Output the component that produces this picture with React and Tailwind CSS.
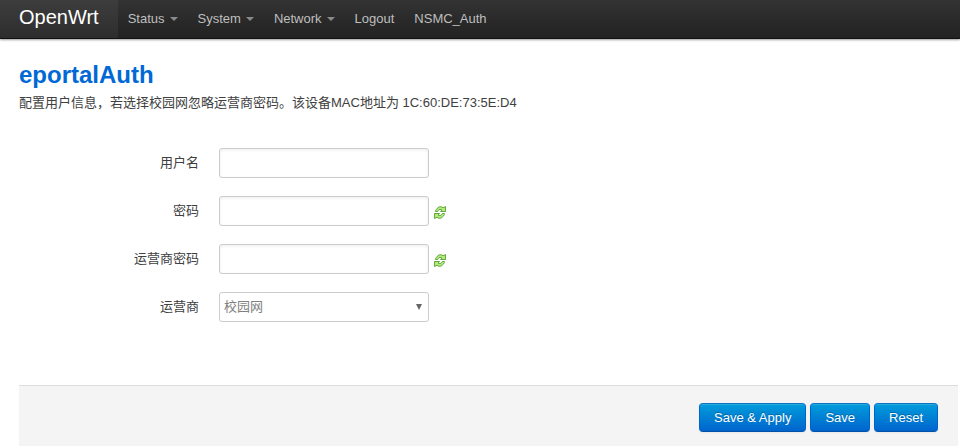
import React from "react";

const menu = [
  { label: "Status", dropdown: true },
  { label: "System", dropdown: true },
  { label: "Network", dropdown: true },
  { label: "Logout" },
  { label: "NSMC_Auth" },
];

const control =
  "h-[30px] w-[210px] rounded-[3px] border border-[#ccc] bg-white px-1 text-[13px] text-[#808080] outline-none";

function Caret() {
  return (
    <span className="mt-px ml-[5px] h-0 w-0 border-x-4 border-t-4 border-x-transparent border-t-[#8a8a8a]" />
  );
}

function ReloadIcon() {
  return (
    <svg width="12" height="13" viewBox="0 0 12 13" aria-hidden="true">
      <path
        d="M1.5 5.5V4.5L4 1.5L5.5 .8H7.5L9 1.8L11.5 .5V5.5H6.5L8 4L6 3.4L4.5 4.2L3.6 5.5Z"
        fill="#b4ea7c"
        stroke="#55a033"
        strokeWidth="0.9"
      />
      <path
        d="M10.5 7.5V8.5L8 11.5L6.5 12.2H4.5L3 11.2L.5 12.5V7.5H5.5L4 9L6 9.6L7.5 8.8L8.4 7.5Z"
        fill="#b4ea7c"
        stroke="#55a033"
        strokeWidth="0.9"
      />
    </svg>
  );
}

function Row({ id, label, children }) {
  return (
    <div className="flex items-center">
      <label htmlFor={id} className="w-[180px] shrink-0 text-right">
        {label}
      </label>
      <div className="ml-5 flex items-center">{children}</div>
    </div>
  );
}

function PasswordField({ id }) {
  return (
    <>
      <input id={id} type="password" className={control + " shadow-[inset_0_1px_3px_rgba(0,0,0,0.08)]"} />
      <button type="button" aria-label="Reveal/hide password" className="mt-[3px] ml-[5px]">
        <ReloadIcon />
      </button>
    </>
  );
}

function ActionButton({ type = "button", children }) {
  return (
    <button
      type={type}
      className="h-[29px] rounded-[4px] border border-[#0064cd] border-t-[#0a74c0] border-b-[#0052a8] bg-linear-to-b from-[#049cdb] to-[#0064cd] px-[14px] text-[13px] leading-[18px] text-white shadow-[inset_0_1px_0_rgba(255,255,255,0.15),0_1px_2px_rgba(0,0,0,0.05)] [text-shadow:0_-1px_0_rgba(0,0,0,0.25)]"
    >
      {children}
    </button>
  );
}

export default function App() {
  return (
    <div className="min-h-screen bg-white font-['Liberation_Sans','Noto_Sans_CJK_SC',sans-serif] text-[13px] leading-[18px] text-[#404040]">
      <header className="flex h-[39px] items-stretch border-b border-[#111] bg-linear-to-b from-[#333] to-[#222] shadow-[0_1px_2px_rgba(0,0,0,0.4)]">
        <a href="#" className="flex items-center bg-white/5 px-[19px] pb-1 text-[20px] leading-5 text-white">
          OpenWrt
        </a>
        <nav className="flex">
          {menu.map((item) => (
            <a key={item.label} href="#" className="flex items-center px-[10px] pb-px text-[#bfbfbf]">
              {item.label}
              {item.dropdown && <Caret />}
            </a>
          ))}
        </nav>
      </header>

      <main className="mr-[2px] ml-[19px] pt-[21px]">
        <h1 className="text-[24px] leading-[30px] font-bold text-[#0069d6]">eportalAuth</h1>
        <p className="mt-1">
          配置用户信息，若选择校园网忽略运营商密码。该设备MAC地址为 1C:60:DE:73:5E:D4
        </p>

        <form>
          <div className="mt-9 flex flex-col gap-[18px]">
            <Row id="username" label="用户名">
              <input
                id="username"
                type="text"
                className={control + " shadow-[inset_0_1px_3px_rgba(0,0,0,0.08)]"}
              />
            </Row>
            <Row id="password" label="密码">
              <PasswordField id="password" />
            </Row>
            <Row id="ispPassword" label="运营商密码">
              <PasswordField id="ispPassword" />
            </Row>
            <Row id="isp" label="运营商">
              <div className="relative">
                <select id="isp" className={control + " appearance-none"}>
                  <option>校园网</option>
                </select>
                <svg
                  className="pointer-events-none absolute top-3 right-[7px]"
                  width="6"
                  height="6"
                  viewBox="0 0 6 6"
                  aria-hidden="true"
                >
                  <path d="M0 0H6L3 6Z" fill="#666" />
                </svg>
              </div>
            </Row>
          </div>

          <div className="mt-[63px] flex justify-end gap-1 border-t border-[#ddd] bg-[#f4f4f4] px-5 pt-[17px] pb-[14px]">
            <ActionButton>Save &amp; Apply</ActionButton>
            <ActionButton type="submit">Save</ActionButton>
            <ActionButton type="reset">Reset</ActionButton>
          </div>
        </form>
      </main>
    </div>
  );
}
